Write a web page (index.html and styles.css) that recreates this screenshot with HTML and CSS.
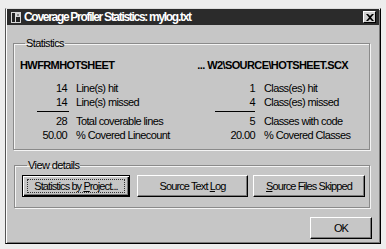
FILE: index.html
```html
<!DOCTYPE html>
<html lang="en">
<head>
    <meta charset="UTF-8">
    <title>Coverage Profiler Statistics</title>
    <link rel="stylesheet" href="styles.css">
</head>
<body>
    <div class="window">
        <div class="titlebar">
            <svg class="app-icon" width="10" height="11" viewBox="0 0 10 11">
                <rect x="0" y="0" width="10" height="11" fill="#d8d8d8"/>
                <rect x="1" y="1" width="3" height="9" fill="#222"/>
                <rect x="5" y="5" width="4" height="5" fill="#222"/>
                <rect x="6" y="2" width="2" height="2" fill="#888"/>
            </svg>
            <span class="title">Coverage Profiler Statistics: mylog.txt</span>
            <div class="close-btn">
                <svg width="8" height="7" viewBox="0 0 8 7">
                    <path d="M0 0 L2 0 L4 2 L6 0 L8 0 L5 3.5 L8 7 L6 7 L4 5 L2 7 L0 7 L3 3.5 Z" fill="#000"/>
                </svg>
            </div>
        </div>

        <div class="content">
            <fieldset class="group stats">
                <legend>Statistics</legend>
                <div class="file-row">
                    <span class="file-name">HWFRMHOTSHEET</span>
                    <span class="file-path">... W2\SOURCE\HOTSHEET.SCX</span>
                </div>
                <div class="columns">
                    <div class="col col-left">
                        <div class="row"><span class="num">14</span><span>Line(s) hit</span></div>
                        <div class="row"><span class="num">14</span><span>Line(s) missed</span></div>
                        <div class="rule"></div>
                        <div class="row"><span class="num">28</span><span>Total coverable lines</span></div>
                        <div class="row"><span class="num">50.00</span><span>% Covered Linecount</span></div>
                    </div>
                    <div class="col col-right">
                        <div class="row"><span class="num">1</span><span>Class(es) hit</span></div>
                        <div class="row"><span class="num">4</span><span>Class(es) missed</span></div>
                        <div class="rule"></div>
                        <div class="row"><span class="num">5</span><span>Classes with code</span></div>
                        <div class="row"><span class="num">20.00</span><span>% Covered Classes</span></div>
                    </div>
                </div>
            </fieldset>

            <fieldset class="group details">
                <legend>View details</legend>
                <div class="buttons">
                    <button class="btn btn-default btn-project"><span class="focus">Statistics by <u>P</u>roject...</span></button>
                    <button class="btn btn-log">Source Text <u>L</u>og</button>
                    <button class="btn btn-skipped"><u>S</u>ource Files Skipped</button>
                </div>
            </fieldset>

            <div class="footer">
                <button class="btn btn-ok">OK</button>
            </div>
        </div>
    </div>
</body>
</html>
```

FILE: styles.css
```css
* {
    box-sizing: border-box;
    margin: 0;
    padding: 0;
}

body {
    background-color: #ededed;
    font-family: "Liberation Sans", Arial, sans-serif;
    font-size: 11px;
    letter-spacing: -0.6px;
    color: #000;
}

/* Window frame */
.window {
    margin: 8px 0 0 5px;
    width: 376px;
    height: 236px;
    background-color: #c6c6c6;
    border: 1px solid;
    border-color: #dcdcdc #000 #000 #555;
    box-shadow: inset 1px 1px #fff, inset -1px -1px #7a7a7a;
    padding: 0 1px 1px;
}

.titlebar {
    display: flex;
    align-items: center;
    height: 16px;
    background-color: #2b2b2b;
    padding: 0 3px 0 4px;
}

.app-icon {
    margin-right: 3px;
}

.title {
    color: #fff;
    font-weight: bold;
    font-size: 12px;
    letter-spacing: -1.3px;
    flex: 1;
}

.close-btn {
    width: 13px;
    height: 12px;
    background-color: #d0d0d0;
    border: 1px solid;
    border-color: #fff #000 #000 #fff;
    display: flex;
    align-items: center;
    justify-content: center;
}

.content {
    padding: 12px 9px 0 6px;
}

/* Group boxes */
.group {
    border: 1px solid #8a8a8a;
    box-shadow: inset 1px 1px #f4f4f4, 1px 1px #f4f4f4;
}

.group legend {
    margin-left: 5px;
    padding: 0 1px;
    line-height: 13px;
}

.stats {
    height: 113px;
    padding: 9px 0 0 6px;
}

.file-row {
    display: flex;
    justify-content: space-between;
    font-weight: bold;
    line-height: 13px;
    padding-right: 21px;
}

.columns {
    display: flex;
    margin-top: 9px;
}

.col-left {
    margin-left: 17px;
    width: 178px;
}

.row {
    display: flex;
    line-height: 14px;
}

.num {
    text-align: right;
    padding-right: 2px;
    margin-right: 7px;
}

.col-left .num {
    width: 32px;
}

.col-right .num {
    width: 42px;
}

.rule {
    height: 1px;
    background-color: #000;
    margin: 2px 0;
}

.col-left .rule {
    width: 32px;
}

.col-right .rule {
    width: 40px;
}

.details {
    margin-top: 9px;
    margin-left: 1px;
    height: 49px;
    padding: 3px 0 0 7px;
}

.buttons {
    display: flex;
}

/* Buttons */
.btn {
    font-family: inherit;
    font-size: 11px;
    letter-spacing: -0.9px;
    height: 22px;
    background-color: #c6c6c6;
    border: 1px solid;
    border-color: #fff #000 #000 #fff;
    box-shadow: inset -1px -1px #7a7a7a;
    color: #000;
    white-space: nowrap;
}

.btn-project {
    width: 108px;
}

.btn-log {
    width: 111px;
    margin-left: 7px;
}

.btn-skipped {
    width: 112px;
    margin-left: 5px;
}

.btn-default {
    border: 1px solid #000;
    box-shadow: inset 1px 1px #fff, inset -1px -1px #000, inset -2px -2px #7a7a7a;
    padding: 3px 4px;
}

.focus {
    display: block;
    border: 1px dotted #333;
    line-height: 12px;
}

.footer {
    display: flex;
    justify-content: flex-end;
    margin-top: 9px;
    margin-right: -2px;
}

.btn-ok {
    width: 62px;
}
```
